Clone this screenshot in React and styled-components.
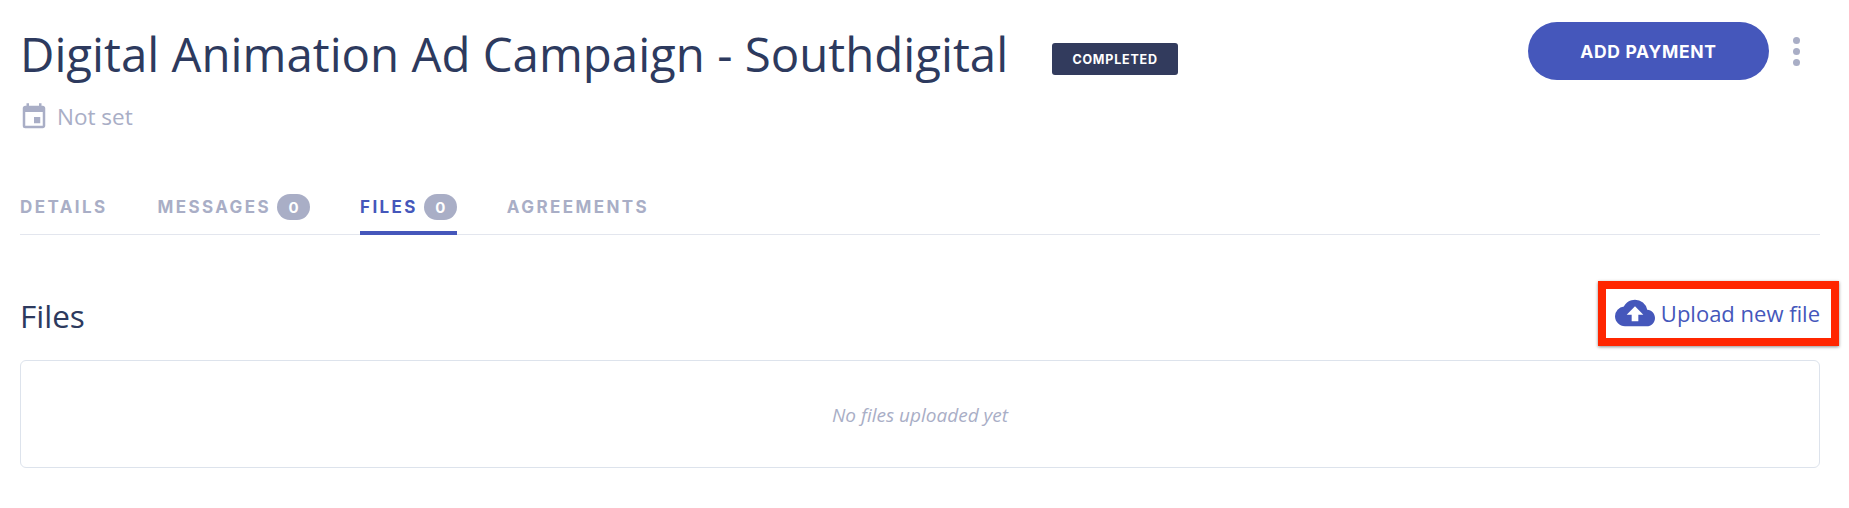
import styled, { createGlobalStyle } from 'styled-components'
import { MdCloudUpload, MdEvent } from 'react-icons/md'

const GlobalStyle = createGlobalStyle`
  html, body {
    margin: 0;
    background: #fff;
  }
  body {
    font-family: "Open Sans", "Liberation Sans", sans-serif;
    color: #2d3a5e;
  }
`

const Page = styled.div`
  width: 1849px;
  height: 508px;
  padding: 22px 29px 0 20px;
  box-sizing: border-box;
  overflow: hidden;
`

const Header = styled.header`
  display: flex;
  justify-content: space-between;
  align-items: flex-start;
  height: 112px;
`

const TitleBlock = styled.div`
  display: flex;
  flex-direction: column;
`

const TitleRow = styled.div`
  display: flex;
  align-items: flex-start;
  gap: 44px;
`

const Title = styled.h1`
  margin: 0;
  font-size: 47.4px;
  line-height: 64px;
  font-weight: 400;
  color: #2d3a5e;
`

const StatusBadge = styled.span`
  margin-top: 21px;
  width: 126px;
  height: 32px;
  display: flex;
  align-items: center;
  justify-content: center;
  border-radius: 3px;
  background: #323b5d;
  color: #fff;
  font-family: Inter, "Liberation Sans", sans-serif;
  font-size: 12.5px;
  font-weight: 700;
  letter-spacing: 0.8px;
`

const DateRow = styled.div`
  display: flex;
  align-items: center;
  gap: 8px;
  margin-top: 16px;
  color: #a9aec6;
  font-size: 22.5px;
  line-height: 30px;
  svg {
    font-size: 30px;
    margin-left: -1px;
  }
`

const Actions = styled.div`
  display: flex;
  align-items: center;
  gap: 24px;
  margin-right: 20px;
`

const PrimaryButton = styled.button`
  width: 241px;
  height: 58px;
  border: 0;
  border-radius: 29px;
  background: #4557bb;
  color: #fff;
  font-family: Inter, "Liberation Sans", sans-serif;
  font-size: 17.5px;
  font-weight: 700;
  letter-spacing: 0.7px;
  cursor: pointer;
`

const MoreDots = styled.button`
  display: flex;
  flex-direction: column;
  gap: 4px;
  padding: 0;
  border: 0;
  background: none;
  span {
    width: 7px;
    height: 7px;
    border-radius: 50%;
    background: #a9aec6;
  }
`

const Tabs = styled.nav`
  display: flex;
  gap: 50px;
  height: 101px;
  align-items: flex-end;
  border-bottom: 1px solid #e3e6ee;
  box-sizing: border-box;
`

const Tab = styled.a`
  display: flex;
  align-items: center;
  gap: 6px;
  height: 45px;
  padding-bottom: 7px;
  box-sizing: border-box;
  margin-bottom: -1px;
  font-family: Inter, "Liberation Sans", sans-serif;
  font-size: 17px;
  font-weight: 700;
  letter-spacing: 2.4px;
  color: ${p => (p.$active ? '#4557bb' : '#a9aec6')};
  border-bottom: 4px solid ${p => (p.$active ? '#4557bb' : 'transparent')};
`

const Count = styled.span`
  width: 33px;
  height: 26px;
  border-radius: 13px;
  background: #a9aec6;
  color: #fff;
  display: flex;
  align-items: center;
  justify-content: center;
  font-size: 15px;
  letter-spacing: 0;
`

const SectionHeader = styled.div`
  display: flex;
  justify-content: space-between;
  align-items: center;
  height: 125px;
  box-sizing: border-box;
  padding-top: 35px;
`

const SectionTitle = styled.h2`
  margin: 0;
  font-size: 31.5px;
  font-weight: 400;
  color: #2d3a5e;
`

const UploadLink = styled.a`
  position: relative;
  display: flex;
  align-items: center;
  gap: 6px;
  color: #4557bb;
  font-size: 22px;
  line-height: 30px;
  margin-bottom: 5px;
  svg {
    font-size: 40px;
  }
`

// red annotation drawn over the link in the screenshot
const Highlight = styled.span`
  position: absolute;
  top: -12px;
  right: -19px;
  bottom: -13px;
  left: -17px;
  border: 8px solid #ff2600;
  box-shadow: 0 1px 3px rgba(0, 0, 0, 0.45);
  pointer-events: none;
`

const EmptyBox = styled.div`
  height: 108px;
  padding-top: 1px;
  display: flex;
  align-items: center;
  justify-content: center;
  border: 1px solid #dde3ec;
  border-radius: 6px;
  box-sizing: border-box;
  color: #a9aec6;
  font-size: 19px;
  font-style: italic;
`

export default function App() {
  return (
    <Page>
      <GlobalStyle />
      <Header>
        <TitleBlock>
          <TitleRow>
            <Title>Digital Animation Ad Campaign - Southdigital</Title>
            <StatusBadge>COMPLETED</StatusBadge>
          </TitleRow>
          <DateRow>
            <MdEvent />
            Not set
          </DateRow>
        </TitleBlock>
        <Actions>
          <PrimaryButton>ADD PAYMENT</PrimaryButton>
          <MoreDots aria-label="More">
            <span />
            <span />
            <span />
          </MoreDots>
        </Actions>
      </Header>
      <Tabs>
        <Tab>DETAILS</Tab>
        <Tab>MESSAGES <Count>0</Count></Tab>
        <Tab $active>FILES <Count>0</Count></Tab>
        <Tab>AGREEMENTS</Tab>
      </Tabs>
      <SectionHeader>
        <SectionTitle>Files</SectionTitle>
        <UploadLink>
          <MdCloudUpload />
          Upload new file
          <Highlight />
        </UploadLink>
      </SectionHeader>
      <EmptyBox>No files uploaded yet</EmptyBox>
    </Page>
  )
}
